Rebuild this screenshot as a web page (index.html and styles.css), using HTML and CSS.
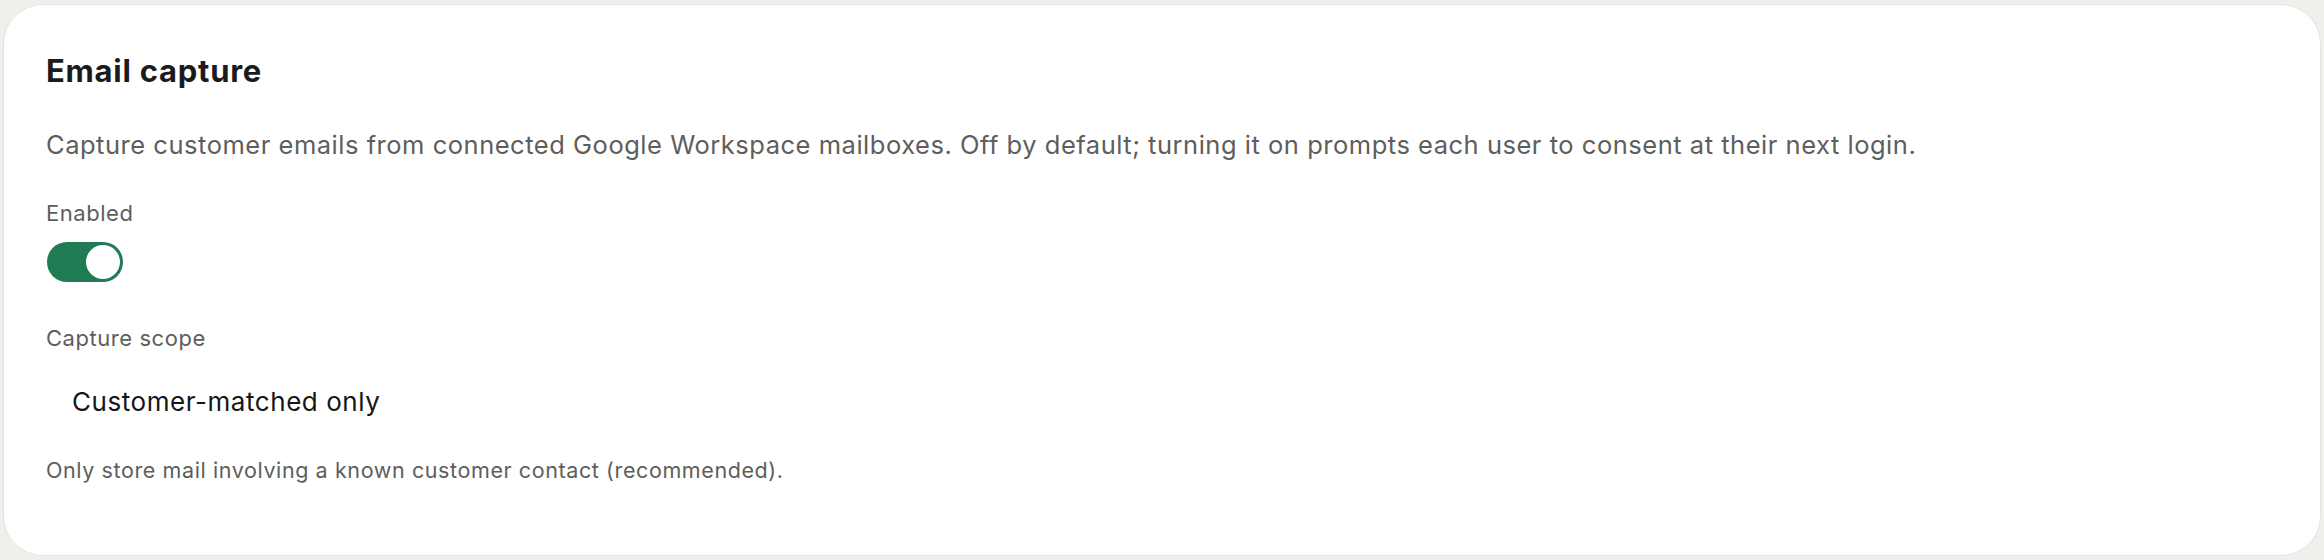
FILE: index.html
```html
<!DOCTYPE html>
<html lang="en">
<head>
<meta charset="utf-8">
<title>Email capture</title>
<link rel="stylesheet" href="styles.css">
</head>
<body>
<section class="card">
  <h2 class="title">Email capture</h2>
  <p class="desc">Capture customer emails from connected Google Workspace mailboxes. Off by default; turning it on prompts each user to consent at their next login.</p>
  <div class="field">
    <div class="label">Enabled</div>
    <button class="toggle" type="button" aria-pressed="true"><span class="knob"></span></button>
  </div>
  <div class="field">
    <div class="label">Capture scope</div>
    <div class="scope">Customer-matched only</div>
    <p class="note">Only store mail involving a known customer contact (recommended).</p>
  </div>
</section>
</body>
</html>
```

FILE: styles.css
```css
html, body {
  margin: 0;
  height: 100%;
}
body {
  background: #efefeb;
  padding: 4px 3px;
  box-sizing: border-box;
  font-family: Inter, "Noto Sans", sans-serif;
}
.card {
  box-sizing: border-box;
  height: 552px;
  background: #ffffff;
  border: 1px solid #e4e4df;
  border-radius: 40px;
  padding: 48px 42px 0;
}
.title {
  margin: 0;
  font-size: 31px;
  line-height: 36px;
  font-weight: 700;
  letter-spacing: 0.75px;
  color: #1b1b1b;
}
.desc {
  margin: 40px 0 0;
  font-size: 25.5px;
  line-height: 32px;
  letter-spacing: 0.52px;
  color: #5e5e5c;
}
.field {
  margin-top: 38px;
}
.label {
  font-size: 22px;
  line-height: 28px;
  letter-spacing: 0.55px;
  color: #5e5e5c;
}
.toggle {
  display: flex;
  justify-content: flex-end;
  align-items: center;
  margin-top: 15px;
  margin-left: 1px;
  width: 76px;
  height: 40px;
  padding: 0 3px;
  border: none;
  border-radius: 20px;
  background: #1e7b54;
  box-sizing: border-box;
}
.knob {
  width: 34px;
  height: 34px;
  border-radius: 50%;
  background: #ffffff;
}
.field + .field {
  margin-top: 42px;
}
.scope {
  margin-top: 35px;
  padding-left: 26px;
  font-size: 26px;
  line-height: 30px;
  letter-spacing: 0.55px;
  color: #161616;
}
.note {
  margin: 39px 0 0;
  font-size: 21.5px;
  line-height: 28px;
  letter-spacing: 0.6px;
  color: #5e5e5c;
}
```
